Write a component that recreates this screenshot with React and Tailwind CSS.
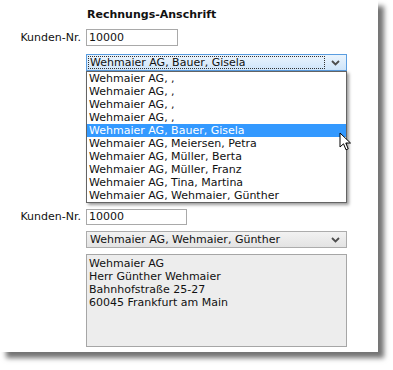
import React from "react";

const kunden = [
  "Wehmaier AG, ,",
  "Wehmaier AG, ,",
  "Wehmaier AG, ,",
  "Wehmaier AG, ,",
  "Wehmaier AG, Bauer, Gisela",
  "Wehmaier AG, Meiersen, Petra",
  "Wehmaier AG, Müller, Berta",
  "Wehmaier AG, Müller, Franz",
  "Wehmaier AG, Tina, Martina",
  "Wehmaier AG, Wehmaier, Günther",
];

const Chevron = () => (
  <svg width="9" height="6" viewBox="0 0 9 6" className="shrink-0">
    <polyline points="1,1 4.5,4.5 8,1" fill="none" stroke="#4d4d4d" strokeWidth="1.8" />
  </svg>
);

const Cursor = () => (
  <svg width="13" height="20" viewBox="0 0 13 20" className="absolute left-[339px] top-[132px] z-30">
    <path
      d="M1 1 L1 15 L4.5 11.8 L7 17.8 L9.2 16.8 L6.8 11 L11.5 11 Z"
      fill="#fff"
      stroke="#000"
      strokeWidth="1"
      strokeLinejoin="round"
    />
  </svg>
);

export default function App() {
  return (
    <div className="w-[393px] h-[370px] bg-white relative overflow-hidden font-['DejaVu_Sans',Verdana,sans-serif] text-[11px] text-[#111]">
      <div className="w-[378px] h-[352px] bg-white shadow-[6px_6px_5px_rgba(0,0,0,0.55)] pt-[8px]">
        <div className="grid grid-cols-[81px_1fr] gap-x-[5px]">
          <div />
          <h2 className="font-bold leading-[14px] pl-[1px]">Rechnungs-Anschrift</h2>

          <label className="mt-[7px] text-right leading-[17px]">Kunden-Nr.</label>
          <div className="mt-[7px] w-[92px] h-[17px] border border-[#a9a9a9] bg-white px-[2px] leading-[15px]">
            10000
          </div>

          <div />
          <div className="relative mt-[8px] w-[261px] z-10">
            <div className="h-[17px] border border-[#5a9de0] bg-gradient-to-b from-[#eaf4fd] to-[#cfe5fa] flex items-center pl-[1px] pr-[6px]">
              <div className="flex-1 h-[13px] border border-dotted border-[#333] leading-[11px] pl-[1px] mr-[6px]">
                Wehmaier AG, Bauer, Gisela
              </div>
              <Chevron />
            </div>
            <ul className="absolute left-0 top-[17px] w-[261px] border border-[#646464] bg-white shadow-[2px_2px_3px_rgba(0,0,0,0.4)]">
              {kunden.map((k, i) => (
                <li
                  key={i}
                  className={
                    i === 4
                      ? "h-[13px] leading-[13px] pl-[2px] bg-[#3399ff] text-white"
                      : "h-[13px] leading-[13px] pl-[2px]"
                  }
                >
                  {k}
                </li>
              ))}
            </ul>
          </div>

          <div className="h-[138px] col-span-2" />

          <label className="text-right leading-[16px]">Kunden-Nr.</label>
          <div className="w-[101px] h-[16px] border border-[#a9a9a9] bg-white px-[2px] leading-[14px]">
            10000
          </div>

          <div />
          <div className="mt-[6px] w-[261px] h-[17px] border border-[#acacac] bg-gradient-to-b from-[#f2f2f2] to-[#e3e3e3] flex items-center pl-[3px] pr-[6px]">
            <span className="flex-1 leading-[15px]">Wehmaier AG, Wehmaier, Günther</span>
            <Chevron />
          </div>

          <div />
          <div className="mt-[6px] w-[261px] h-[93px] border border-[#a6a6a6] bg-[#ededed] px-[2px] pt-[2px] leading-[13px]">
            <p>Wehmaier AG</p>
            <p>Herr Günther Wehmaier</p>
            <p>Bahnhofstraße 25-27</p>
            <p>60045 Frankfurt am Main</p>
          </div>
        </div>
      </div>
      <Cursor />
    </div>
  );
}
